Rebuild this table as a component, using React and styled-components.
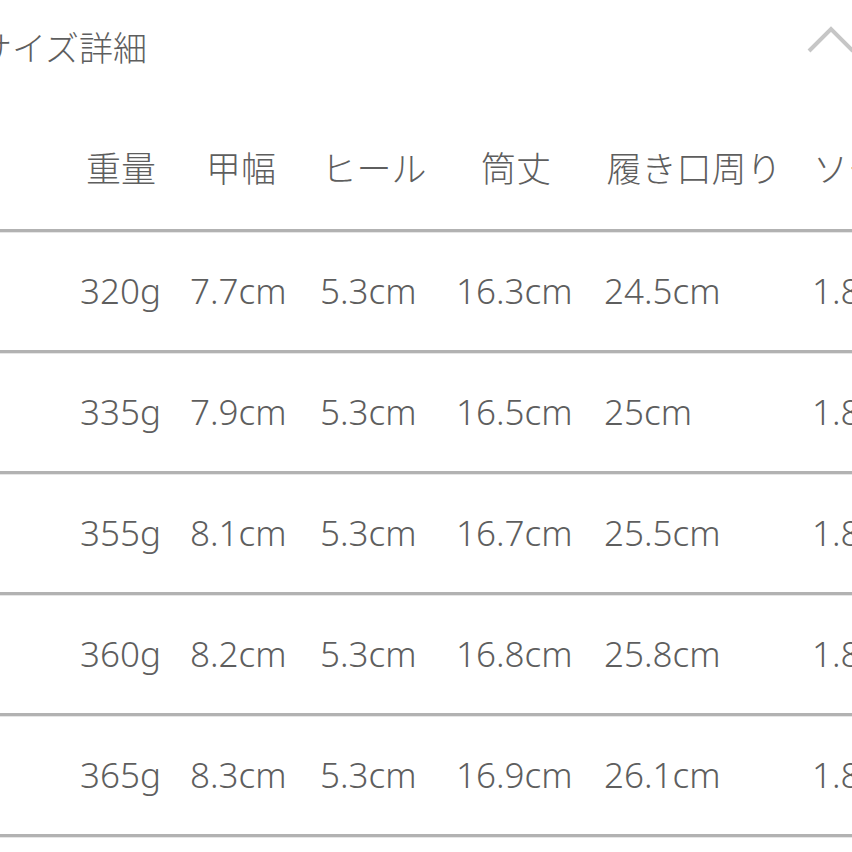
import React from "react";
import styled, { createGlobalStyle } from "styled-components";

const GlobalStyle = createGlobalStyle`
  html, body {
    margin: 0;
    padding: 0;
    background: #ffffff;
    overflow: hidden;
  }
  body {
    font-family: "Noto Sans", "Noto Sans CJK JP", sans-serif;
    color: #5e5e5e;
  }
`;

const Page = styled.div`
  width: 852px;
  height: 852px;
  overflow: hidden;
`;

const TitleBar = styled.div`
  height: 108px;
  box-sizing: border-box;
  padding-top: 24px;
  display: flex;
  align-items: flex-start;
  justify-content: space-between;
`;

const Title = styled.h2`
  margin: 0 0 0 -22px;
  font-size: 34px;
  font-weight: 300;
  line-height: 48px;
  color: #5e5e5e;
  white-space: nowrap;
`;

const Chevron = styled.svg`
  width: 50px;
  height: 30px;
  margin-top: 2px;
  margin-right: -4px;
  flex-shrink: 0;
`;

const Row = styled.div`
  display: grid;
  grid-template-columns: 110px 130px 136px 148px 208px 170px;
  align-items: center;
  height: ${({ $head }) => ($head ? "121px" : "118px")};
  padding-left: 80px;
  border-bottom: 3px solid #b2b2b2;
  box-shadow: 0 1px 0 #e6e6e6;
`;

const Cell = styled.div`
  padding-right: 28px;
  font-size: 35px;
  font-weight: 300;
  line-height: 48px;
  white-space: nowrap;
  text-align: ${({ $head }) => ($head ? "center" : "left")};
`;

const heads = ["重量", "甲幅", "ヒール", "筒丈", "履き口周り", "ソール厚"];

const rows = [
  ["320g", "7.7cm", "5.3cm", "16.3cm", "24.5cm", "1.8cm"],
  ["335g", "7.9cm", "5.3cm", "16.5cm", "25cm", "1.8cm"],
  ["355g", "8.1cm", "5.3cm", "16.7cm", "25.5cm", "1.8cm"],
  ["360g", "8.2cm", "5.3cm", "16.8cm", "25.8cm", "1.8cm"],
  ["365g", "8.3cm", "5.3cm", "16.9cm", "26.1cm", "1.8cm"],
];

export default function App() {
  return (
    <Page>
      <GlobalStyle />
      <TitleBar>
        <Title>サイズ詳細</Title>
        <Chevron viewBox="0 0 50 30">
          <polyline
            points="3,25 25,3 47,25"
            fill="none"
            stroke="#c6c6c6"
            strokeWidth="4"
          />
        </Chevron>
      </TitleBar>
      <Row $head>
        {heads.map((h) => (
          <Cell $head key={h}>
            {h}
          </Cell>
        ))}
      </Row>
      {rows.map((r, i) => (
        <Row key={i}>
          {r.map((v, j) => (
            <Cell key={j}>{v}</Cell>
          ))}
        </Row>
      ))}
    </Page>
  );
}
